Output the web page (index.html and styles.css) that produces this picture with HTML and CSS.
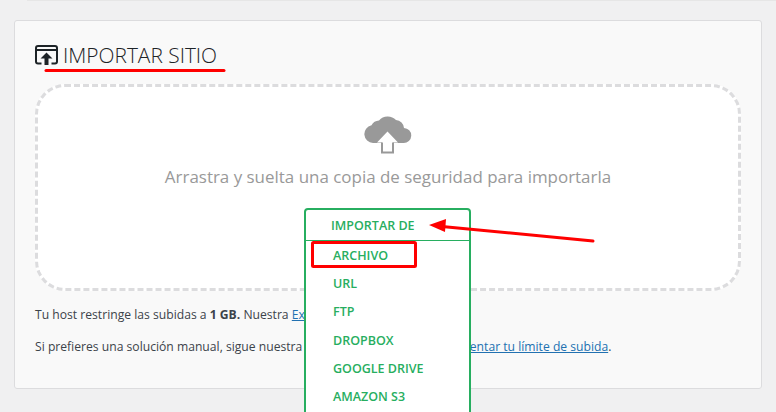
FILE: index.html
```html
<!DOCTYPE html>
<html lang="es">
<head>
  <meta charset="UTF-8" />
  <title>Importar sitio</title>
  <link rel="stylesheet" href="styles.css">
</head>
<body>

<div class="top-line"></div>

<main class="panel">
  <h1 class="title">
    <svg class="title-icon" width="23" height="20" viewBox="0 0 23 20" aria-hidden="true">
      <path d="M6.500 18.500H3a2 2 0 0 1-2-2V3a2 2 0 0 1 2-2h17a2 2 0 0 1 2 2v13.500a2 2 0 0 1-2 2h-3.500" fill="none" stroke="#1d2327" stroke-width="2"/>
      <path d="M1 5h21" stroke="#1d2327" stroke-width="2"/>
      <path d="M11.500 7.500l6 6h-4V20h-4v-6.500h-4z" fill="#1d2327"/>
    </svg>
    IMPORTAR SITIO
  </h1>

  <section class="dropzone">
    <svg class="cloud" width="48" height="38" viewBox="0 0 48 38" aria-hidden="true">
      <path d="M9 27a9 9 0 0 1-1.500-17.800A9 9 0 0 1 15 4.500a11.500 11.500 0 0 1 17-.5 8.500 8.500 0 0 1 8 8 7.500 7.500 0 0 1-.5 15z" fill="#999"/>
      <path d="M23.500 15.500L34 26.500h-5V36H18v-9.500h-5z" fill="#fff"/>
      <path d="M18 26.500v10h11v-10" fill="none" stroke="#999" stroke-width="2"/>
    </svg>
    <p class="drop-text">Arrastra y suelta una copia de seguridad para importarla</p>
  </section>

  <p class="note">Tu host restringe las subidas a <strong>1 GB.</strong> Nuestra <a href="#">Extensión Ilimitada</a>.</p>
  <p class="note">Si prefieres una solución manual, sigue nuestra guía, paso a paso: <a href="#">cómo aumentar tu límite de subida</a>.</p>

  <nav class="import-menu">
    <div class="menu-head">IMPORTAR DE</div>
    <ul class="menu-list">
      <li>ARCHIVO</li>
      <li>URL</li>
      <li>FTP</li>
      <li>DROPBOX</li>
      <li>GOOGLE DRIVE</li>
      <li>AMAZON S3</li>
    </ul>
  </nav>
</main>

<!-- marcas rojas encima de la captura -->
<svg class="marks" width="776" height="412" viewBox="0 0 776 412" aria-hidden="true">
  <path d="M46 70.500H224" stroke="#f00" stroke-width="3" stroke-linecap="round"/>
  <rect x="312.500" y="242.500" width="103" height="24" rx="1" fill="none" stroke="#f00" stroke-width="3"/>
  <path d="M593 241L442 226.500" stroke="#f00" stroke-width="3" stroke-linecap="round"/>
  <path d="M429 225L446 219L445 232z" fill="#f00"/>
</svg>

</body>
</html>
```
FILE: styles.css
```css
html, body {
  height: 412px;
  overflow: hidden;
}

body {
  margin: 0;
  position: relative;
  background: #f0f0f1;
  color: #3c434a;
  font-family: "Open Sans", sans-serif;
  font-size: 12px;
}

.top-line {
  height: 1px;
  margin-left: 27px;
  background: #e6e6e6;
}

.panel {
  position: relative;
  box-sizing: border-box;
  width: 748px;
  height: 369px;
  margin: 19px 0 0 14px;
  padding: 21px 20px 0 20px;
  background: #f9f9f9;
  border: 1px solid #dcdcde;
  border-radius: 3px;
}

.title {
  display: flex;
  align-items: center;
  gap: 5px;
  height: 26px;
  margin: 0 0 16px;
  color: #1d2327;
  font-size: 20.900px;
  font-weight: 300;
}

.title-icon {
  flex-shrink: 0;
}

.dropzone {
  box-sizing: border-box;
  width: 706px;
  height: 207px;
  padding-top: 29px;
  background: #fff;
  border: 3px dashed #dcdcde;
  border-radius: 30px;
  text-align: center;
}

.cloud {
  display: block;
  margin: 0 auto;
}

.drop-text {
  margin: 11px 0 0;
  color: #999;
  font-size: 16.950px;
  line-height: 24px;
}

.note {
  margin: 0;
  padding-top: 15px;
  line-height: 18px;
  font-size: 12.150px;
}

.note + .note {
  padding-top: 14px;
}

.note a {
  color: #2271b1;
}

.import-menu {
  position: absolute;
  left: 289px;
  top: 187px;
  width: 167px;
  height: 220px;
  box-sizing: border-box;
  background: #fff;
  border: 2px solid #27ae60;
  border-radius: 4px 4px 0 0;
  color: #27ae60;
  font-weight: 600;
  font-size: 12.500px;
}

.menu-head {
  height: 30px;
  padding-left: 25px;
  line-height: 32px;
  border-bottom: 1px solid #27ae60;
}

.menu-list {
  margin: 0;
  padding: 0;
  list-style: none;
}

.menu-list li {
  height: 28.200px;
  padding-left: 27px;
  line-height: 30px;
}

.marks {
  position: absolute;
  left: 0;
  top: 0;
  pointer-events: none;
}
```
